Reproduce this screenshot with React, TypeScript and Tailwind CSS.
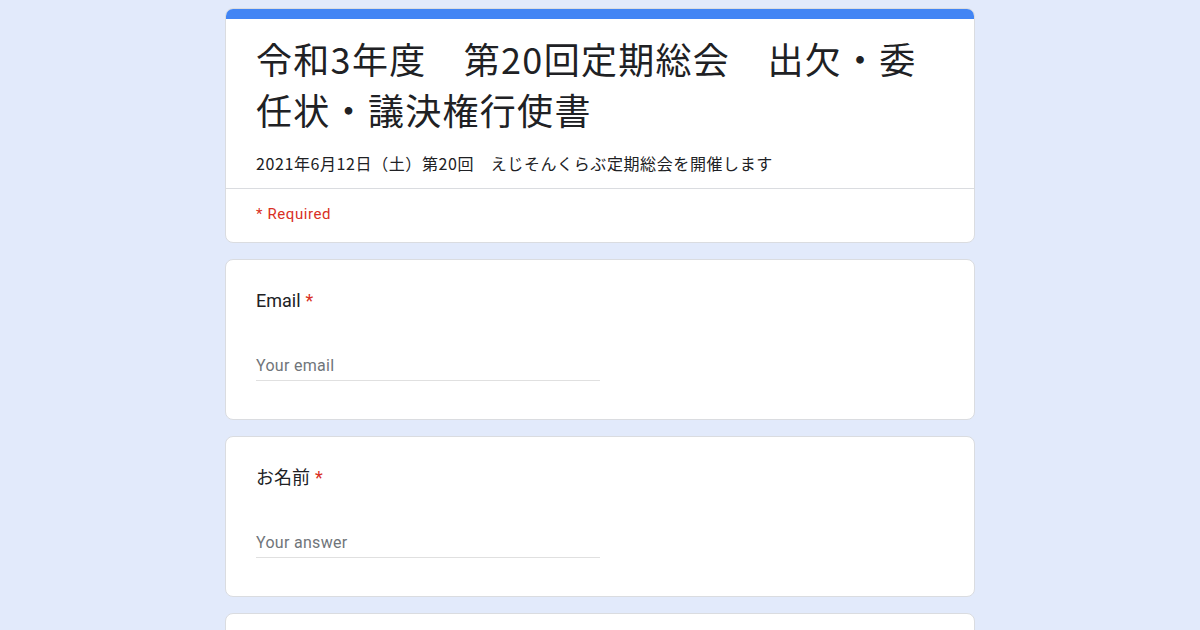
const FONT = "font-['Roboto','Noto_Sans_CJK_JP',sans-serif]";
const CJK = "font-['Noto_Sans_CJK_JP','Roboto',sans-serif]";

function Question({ label, placeholder }: { label: string; placeholder: string }) {
  return (
    <div className="w-[750px] shrink-0 rounded-lg border border-[#dadce0] bg-white px-[30px] pt-[29px] pb-[38px]">
      <div className="text-[18px] leading-[24px] text-[#202124]">
        {label}
        <span className="ml-[5px] text-[#d93025]">*</span>
      </div>
      <div className="mt-[41px] w-[344px] border-b border-[#e0e0e0] pb-[2px]">
        <span className="text-[16px] leading-[24px] tracking-[0.3px] text-[#70757a]">{placeholder}</span>
      </div>
    </div>
  );
}

export default function App() {
  return (
    <div className={`${FONT} flex h-[630px] w-full flex-col items-center gap-[16px] overflow-hidden bg-[#e2eafb] pt-2`}>
      {/* header card */}
      <div className="w-[750px] shrink-0 overflow-hidden rounded-lg border border-[#dadce0] bg-white">
        <div className="-mx-px -mt-px h-[11px] bg-[#4285f4]" />
        <div className="px-[30px] pt-[14px] pb-[13px]">
          <h1 className={`${CJK} text-[36px] leading-[51px] tracking-[1.3px] font-normal text-[#202124]`}>
            令和3年度　第20回定期総会　出欠・委
            <br />
            任状・議決権行使書
          </h1>
          <p className={`${CJK} mt-[16px] text-[16px] leading-[24px] tracking-[0.6px] text-[#202124]`}>
            2021年6月12日（土）第20回　えじそんくらぶ定期総会を開催します
          </p>
        </div>
        <div className="border-t border-[#dadce0] px-[30px] pt-[13px] pb-[16px]">
          <span className="text-[15px] leading-[20px] tracking-[0.6px] text-[#d93025]">* Required</span>
        </div>
      </div>

      <Question label="Email" placeholder="Your email" />
      <Question label="お名前" placeholder="Your answer" />

      <div className="h-[160px] w-[750px] shrink-0 rounded-lg border border-[#dadce0] bg-white" />
    </div>
  );
}
